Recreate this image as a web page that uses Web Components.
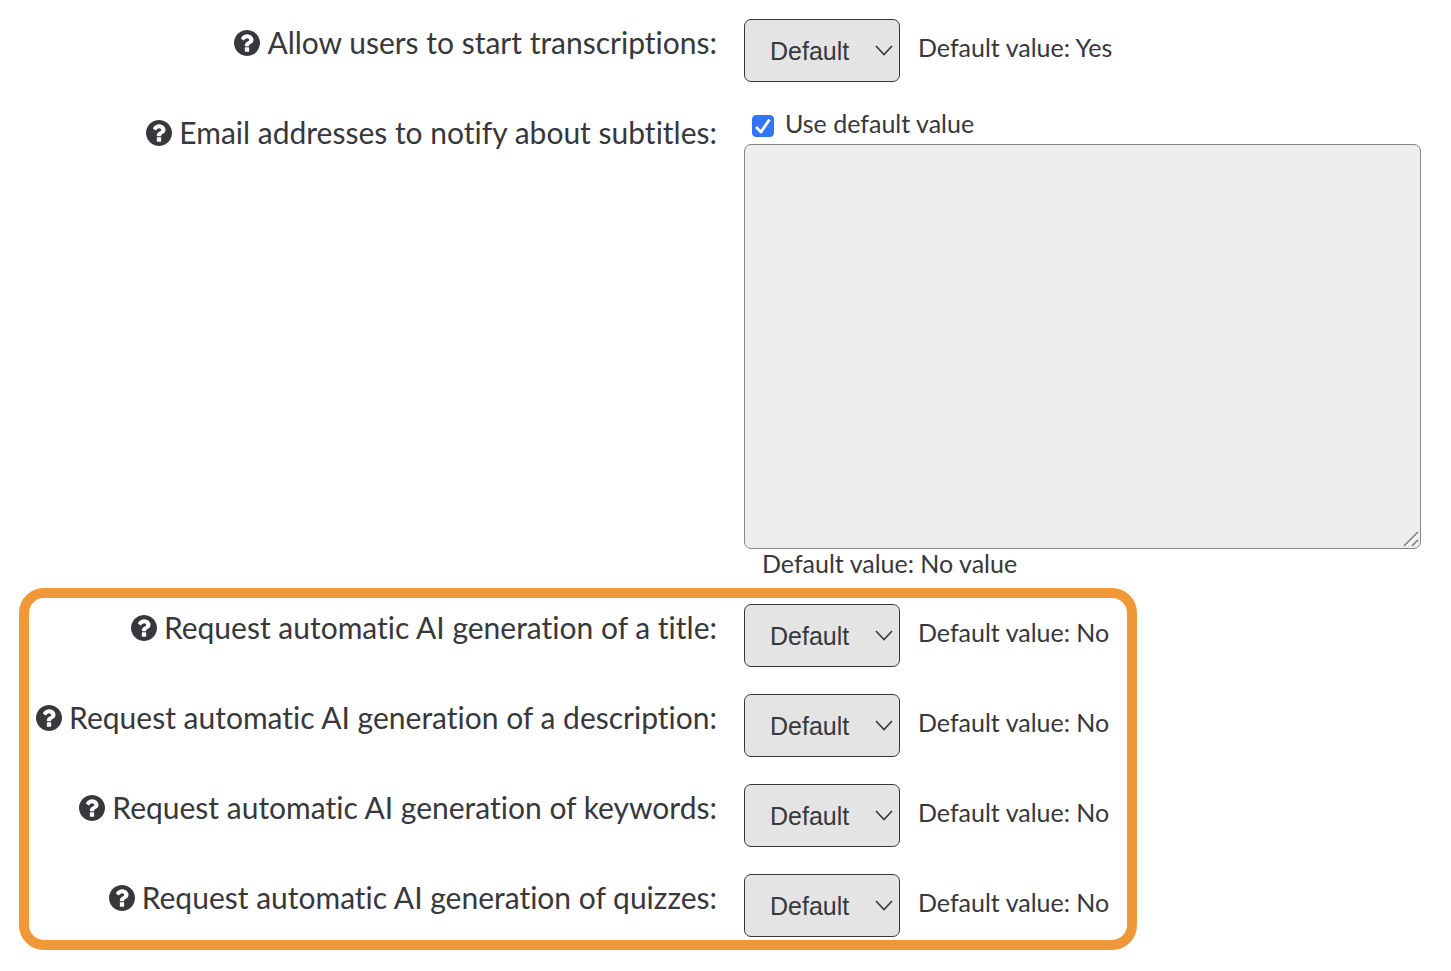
<!DOCTYPE html>
<html lang="en">
<head>
<meta charset="utf-8">
<meta name="viewport" content="width=device-width, initial-scale=1">
<title>Media settings</title>
<style>
  body { margin: 0; background: #fff; }
</style>
</head>
<body>
<settings-form>
  <setting-select default-value="Yes">Allow users to start transcriptions:</setting-select>
  <setting-textarea default-value="No value">Email addresses to notify about subtitles:</setting-textarea>
  <highlight-frame>
    <setting-select default-value="No">Request automatic AI generation of a title:</setting-select>
    <setting-select default-value="No">Request automatic AI generation of a description:</setting-select>
    <setting-select default-value="No">Request automatic AI generation of keywords:</setting-select>
    <setting-select default-value="No">Request automatic AI generation of quizzes:</setting-select>
  </highlight-frame>
</settings-form>
<script>
  const rowStyles = `
    :host { display: grid; grid-template-columns: var(--label-width) minmax(0, 1fr); column-gap: 27px; align-items: start; }
    .label { display: flex; justify-content: flex-end; align-items: center; gap: 7px; text-align: right; padding-top: 7px; line-height: 36px; }
    .label label { margin-top: -2px; }
    .hint { font-size: 25px; line-height: 32px; }
  `;

  function define(name, html, setup) {
    const template = document.createElement('template');
    template.innerHTML = html;
    customElements.define(name, class extends HTMLElement {
      constructor() {
        super();
        this.attachShadow({ mode: 'open' }).append(template.content.cloneNode(true));
      }
      connectedCallback() {
        if (setup) setup(this, this.shadowRoot);
      }
    });
  }

  const showDefault = (host, root) => {
    root.querySelector('.hint').textContent = 'Default value: ' + host.getAttribute('default-value');
  };

  define('settings-form', `
    <style>
      :host { display: block; --label-width: round(down, calc(50vw - 27px), 1px);
        font: 30px/36px Lato, sans-serif; font-variant-ligatures: none; color: #37373c; }
      form { display: flex; flex-direction: column; padding: 19px 30px 21px 19px; }
    </style>
    <form><slot></slot></form>
  `);

  define('highlight-frame', `
    <style>
      :host { display: flex; flex-direction: column; gap: 27px; box-sizing: border-box; width: fit-content;
        border: 10px solid #f09837; border-radius: 25px; padding: 6px 18px 3px 0; margin-top: 9px; }
      ::slotted(*) { --label-width: round(down, calc(50vw - 37px), 1px); }
    </style>
    <slot></slot>
  `);

  define('help-button', `
    <style>
      :host { display: block; flex: none; }
      button { display: block; border: 0; padding: 0; background: none; color: inherit; cursor: pointer; }
      svg { display: block; width: 26px; height: 26px; fill: currentColor; }
    </style>
    <button type="button" aria-label="Help">
      <svg viewBox="128 128 1536 1536" aria-hidden="true"><path d="M1024 1376v-192q0-14-9-23t-23-9H800q-14 0-23 9t-9 23v192q0 14 9 23t23 9h192q14 0 23-9t9-23zm256-672q0-88-55.500-163T1086 425t-170-41q-243 0-371 213-15 24 8 42l132 100q7 6 19 6 16 0 25-12 53-68 86-92 34-24 86-24 48 0 85.500 26t37.500 59q0 38-20 61t-68 45q-63 28-115.500 86.500T768 1020v36q0 14 9 23t23 9h192q14 0 23-9t9-23q0-19 21.500-49.500T1100 957q32-18 49-28.500t46-35 44.500-48 28-60.500 12.500-81zm384 192q0 209-103 385.500T1281.500 1561 896 1664t-385.500-103T231 1281.500 128 896t103-385.500T510.500 231 896 128t385.500 103T1561 510.500 1664 896z"/></svg>
    </button>
  `);

  define('setting-select', `
    <style>
      ${rowStyles}
      .control { display: flex; align-items: flex-start; gap: 18px; }
      .picker { display: grid; flex: none; align-items: center; }
      .picker > * { grid-area: 1 / 1; }
      select { appearance: none; box-sizing: border-box; width: 156px; height: 63px; margin: 0; padding: 0 40px 0 25px;
        border: 1px solid #37373c; border-radius: 7px; background: #e4e4e4; color: inherit;
        font: 25px/32px "Liberation Sans", Arial, sans-serif; }
      svg { justify-self: end; margin-right: 7px; width: 18px; height: 11px; pointer-events: none;
        fill: none; stroke: currentColor; stroke-width: 1.6; }
      .hint { padding-top: 12px; white-space: nowrap; }
    </style>
    <div class="label"><help-button></help-button><label for="value"><slot></slot></label></div>
    <div class="control">
      <div class="picker">
        <select id="value"><option>Default</option><option>Yes</option><option>No</option></select>
        <svg viewBox="0 0 18 11" aria-hidden="true"><path d="M1 1 9 9.500 17 1"/></svg>
      </div>
      <span class="hint"></span>
    </div>
  `, showDefault);

  define('setting-textarea', `
    <style>
      ${rowStyles}
      :host { margin-top: 27px; }
      .use-default { display: flex; align-items: center; gap: 11px; height: 33px; padding: 0 0 2px 8px; }
      .use-default label { font-size: 25px; line-height: 32px; padding-bottom: 6px; }
      .box { display: grid; flex: none; place-items: center; }
      .box > * { grid-area: 1 / 1; }
      input { appearance: none; width: 22px; height: 22px; margin: 0; border-radius: 4px; border: 1px solid #8a8a8a; box-sizing: border-box; }
      input:checked { background: #3276f5; border-color: #3276f5; }
      .tick { width: 22px; height: 22px; fill: none; stroke: #fff; stroke-width: 2.8; stroke-linejoin: round; pointer-events: none; visibility: hidden; }
      input:checked + .tick { visibility: visible; }
      .area { display: grid; }
      .area > * { grid-area: 1 / 1; }
      textarea { box-sizing: border-box; display: block; width: 100%; height: 405px; margin: 0; resize: none;
        border: 1px solid #868686; border-radius: 7px; background: #eee; padding: 12px; color: inherit; font: inherit; }
      .grip { place-self: end; width: 16px; height: 16px; margin: 0 2px 2px 0; fill: none; pointer-events: none; }
      .hint { display: block; padding: 0 0 0 18px; margin-top: -2px; }
    </style>
    <div class="label"><help-button></help-button><label for="value"><slot></slot></label></div>
    <div>
      <div class="use-default">
        <span class="box"><input type="checkbox" id="use-default" checked><svg class="tick" viewBox="0 0 22 22" aria-hidden="true"><path d="M4 12 9 17 17.500 4.500"/></svg></span>
        <label for="use-default">Use default value</label>
      </div>
      <div class="area">
        <textarea id="value" disabled></textarea>
        <svg class="grip" viewBox="0 0 16 16" aria-hidden="true"><path stroke="#fff" stroke-width="1.500" d="M3 15 15 3M11 15l4-4"/><path stroke="#858585" stroke-width="1.700" d="M1 15 15 1M9 15l6-6"/></svg>
      </div>
      <span class="hint"></span>
    </div>
  `, (host, root) => {
    showDefault(host, root);
    const box = root.querySelector('input');
    box.addEventListener('change', () => { root.querySelector('textarea').disabled = box.checked; });
  });
</script>
</body>
</html>
